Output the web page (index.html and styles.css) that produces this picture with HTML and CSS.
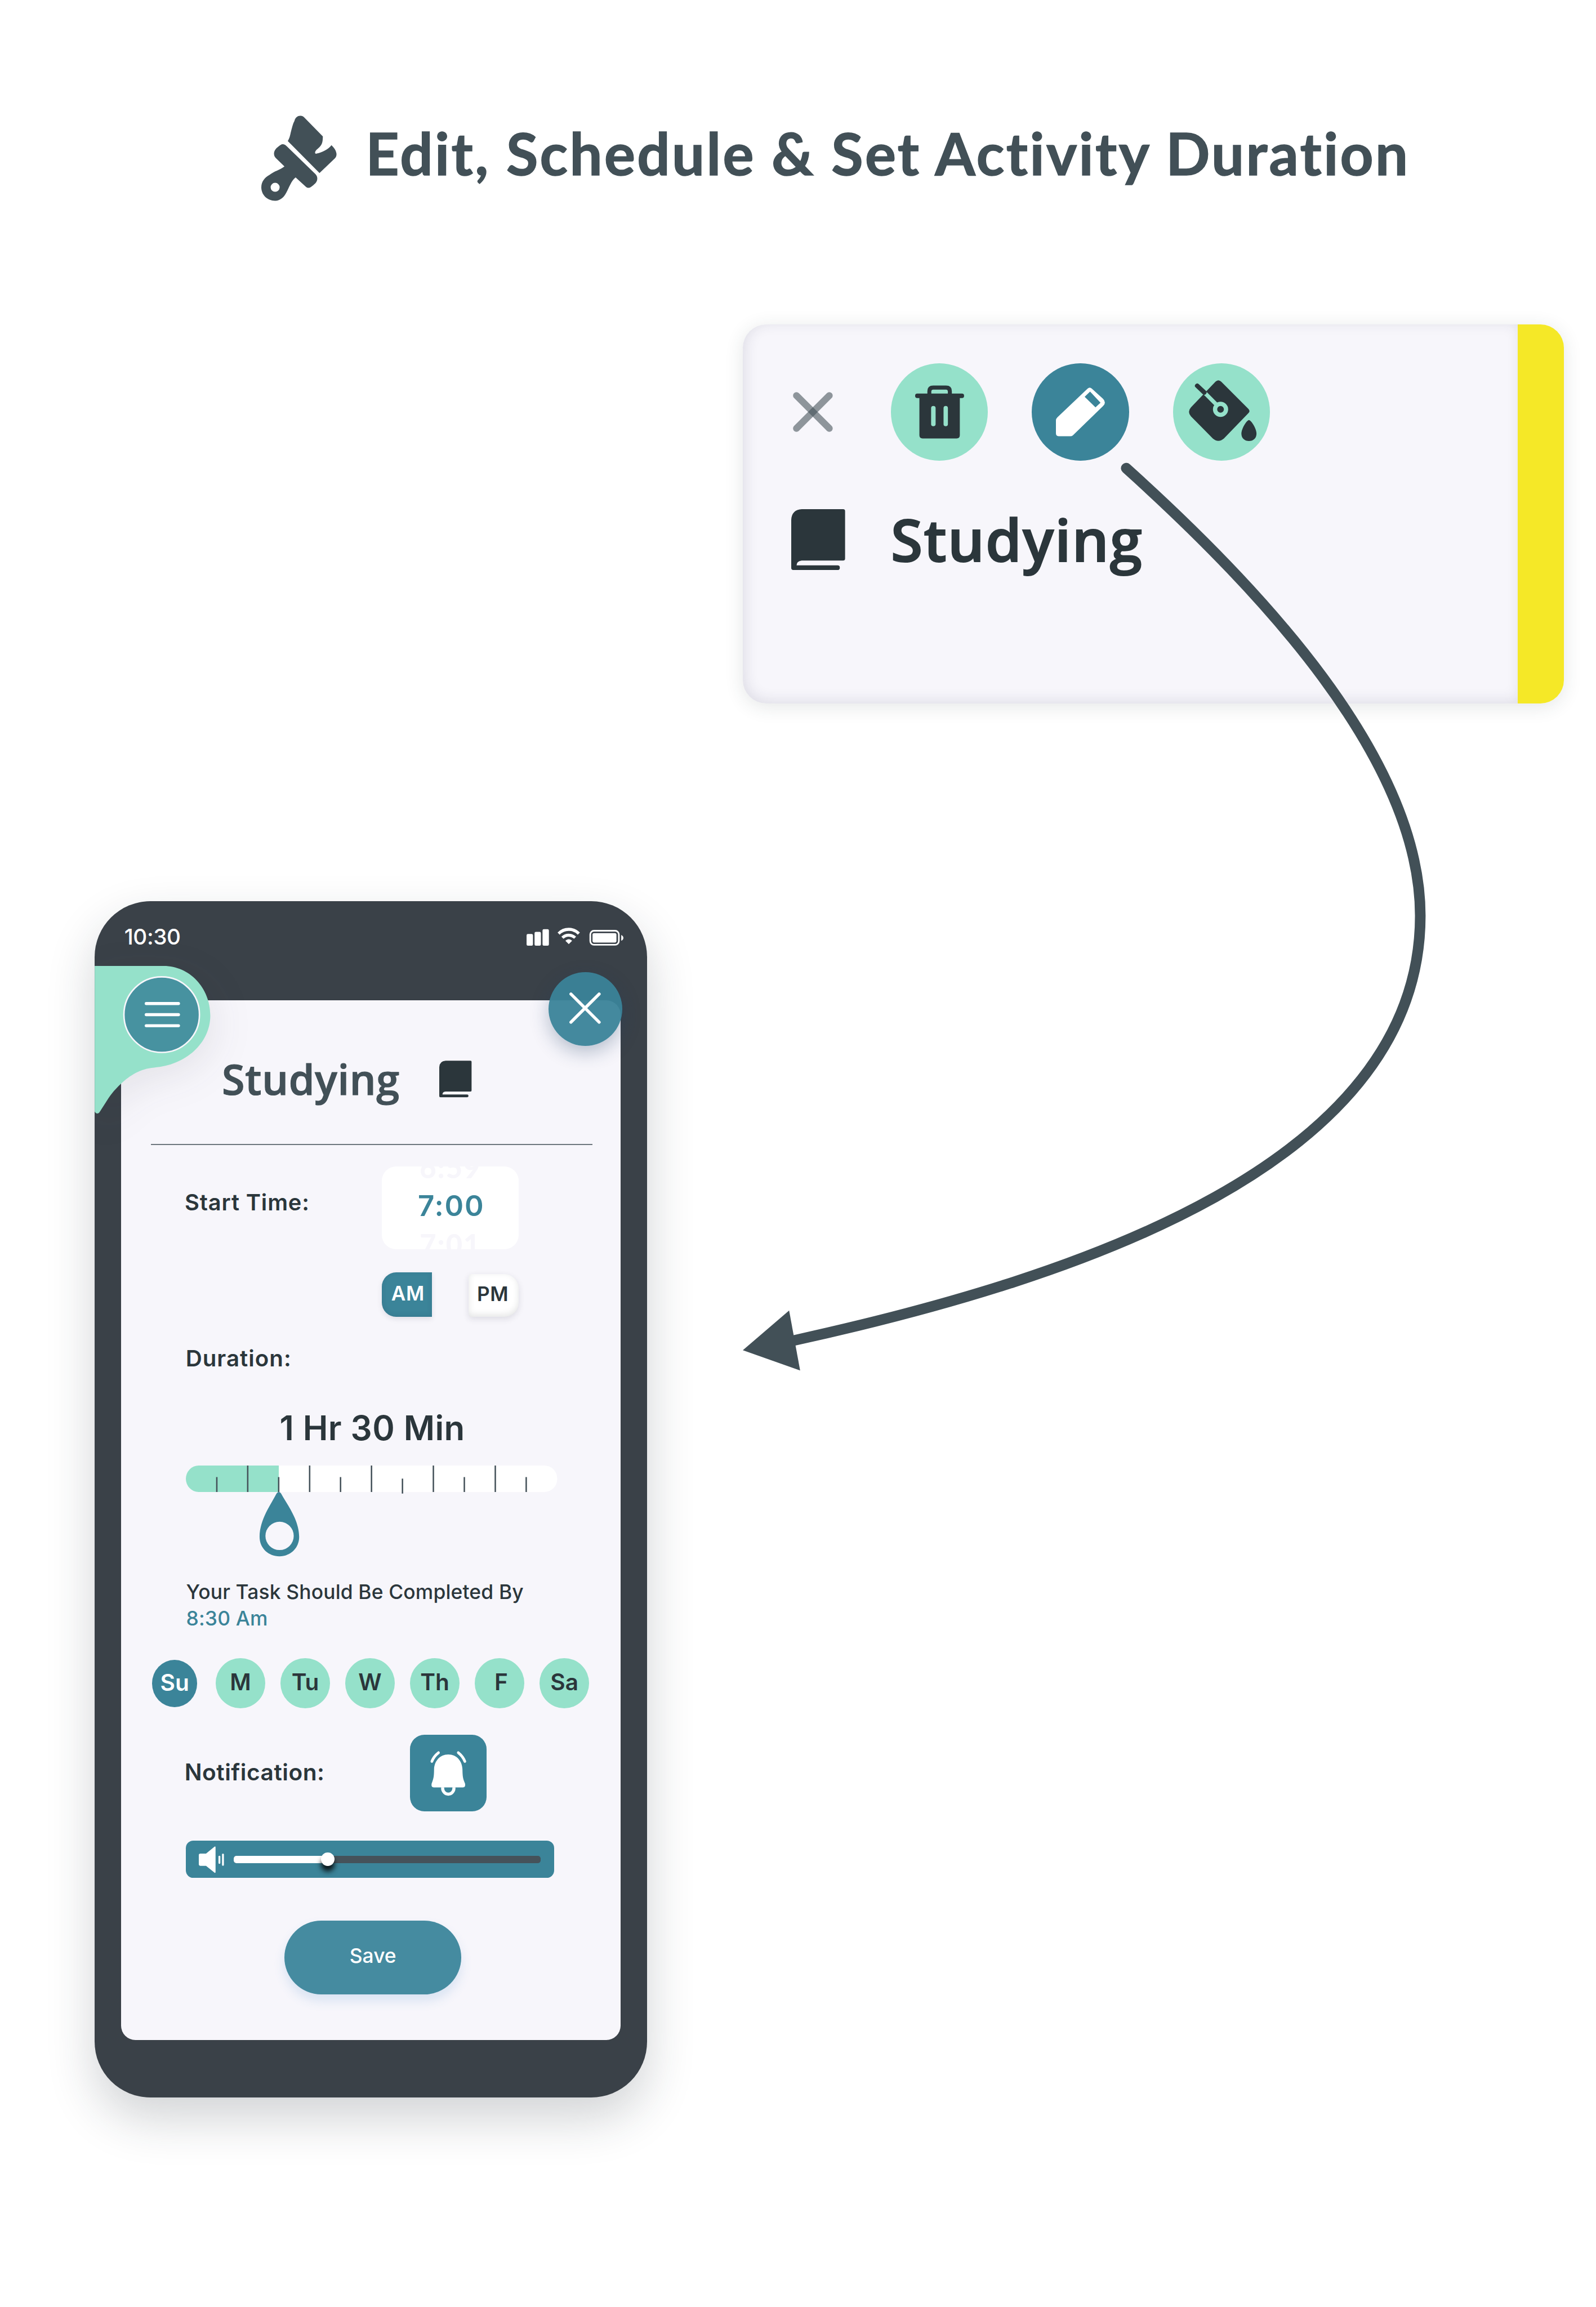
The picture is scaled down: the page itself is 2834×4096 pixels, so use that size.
FILE: index.html
```html
<!DOCTYPE html>
<html lang="en">
<head>
<meta charset="utf-8">
<title>Edit, Schedule &amp; Set Activity Duration</title>
<link rel="stylesheet" href="styles.css">
</head>
<body>
<svg class="defs" aria-hidden="true">
  <symbol id="book" viewBox="0 0 101.4 114.4">
    <path d="M20 0H97.4Q101.4 0 101.4 4V92.5Q101.4 96.5 97.4 96.5H19.6Q10 97.5 10 105.7H87A4.35 4.35 0 0 1 87 114.4H4Q0 114.4 0 110.4V20Q1 1 20 0Z" fill="#2b363b"/>
  </symbol>
</svg>
<main class="page">
  <header class="header">
    <svg class="header-icon" viewBox="0 0 141.7 159.4" fill="#425057">
      <path d="M62.4 9C65 -2 77 -3 82 4L115.7 38.3C115.5 44 115.5 48 113.6 52.3C110.5 59 104 62 101.7 66.3C100 70 102 71.5 104.5 70.5C114 68 126 63 131.9 54.7C137 60 140 64 141 69C142 73 141 77 138.2 79.7L109.4 107.3L49.8 47C53 42 54 37 55.4 30.7C57.500 23 59 15 62.4 9Z"/>
      <path fill-rule="evenodd" d="M45.600 54.700Q40.700 51.500 36 54.500C31 58 24.500 62.500 23.900 69.700C23.700 74 25 76.500 27.400 79L43.500 94.700C36 101 23 104 15.400 110.700C7 115 0 123 0 134C0 148 11 159.300 26 159.300C36 159.300 43 152 47 144C52.500 134 56 122 64.500 115.300L84.200 133.300Q88.400 136.700 93.300 133.300C99 129 105 125 105.200 118.300C105.500 114 104 111.500 101.700 109ZM26 125.500A8.500 8.500 0 1 1 26 142.500A8.500 8.500 0 0 1 26 125.500Z"/>
    </svg>
    <h1 class="title">Edit, Schedule &amp; Set Activity Duration</h1>
  </header>

  <section class="card">
    <div class="card-body">
      <div class="actions">
        <svg class="dismiss" viewBox="0 0 75 75" stroke="#425057" stroke-width="12.800" stroke-linecap="round" stroke-opacity=".58">
          <path d="M6.600 6.600L68.400 68.400"/><path d="M68.400 6.600L6.600 68.400"/>
        </svg>
        <div class="action action-trash">
          <svg class="icon-trash" viewBox="0 0 92 100" fill="#2b363b">
            <path fill-rule="evenodd" d="M23 17V11Q23 0.500 34 0.500H58Q69 0.500 69 11V17H61.500V12Q61.500 8.200 58 8.200H34Q30.400 8.200 30.400 12V17Z"/>
            <rect x="0" y="15.700" width="92" height="8.300" rx="4"/>
            <path fill-rule="evenodd" d="M8 20H84V94Q84 100 78 100H14Q8 100 8 94ZM34.200 38.800Q30 38.800 30 43V73Q30 77 34.200 77T38.500 73V43Q38.500 38.800 34.200 38.800ZM57.500 38.800Q53.400 38.800 53.400 43V73Q53.400 77 57.500 77T61.600 73V43Q61.600 38.800 57.500 38.800Z"/>
          </svg>
        </div>
        <div class="action action-edit">
          <svg class="icon-pencil" viewBox="0 0 92 91.600" fill="#fff">
            <path fill-rule="evenodd" d="M2.700 56L59.500 2Q63.500 -1.500 67.500 2L88.500 21.300Q95.500 28.600 88.500 35L31.800 90Q30 91.600 27 91.600H6Q0 91.600 0 86V62Q0 58.500 2.700 56ZM64.200 7.800L54 17.400L74.400 37.300L83.800 28.600Z"/>
          </svg>
        </div>
        <div class="action action-fill">
          <svg class="icon-bucket" viewBox="0 0 127.300 115" fill="#2b363b">
            <path d="M50 3Q55.500 -2.500 61 3L112 54Q116 58.500 112 62L66 109.500Q55.500 118.500 45 109.500L4 68Q-3.500 59.500 4 51Z"/>
            <path d="M31 25L56 50" stroke="#95e1ca" stroke-width="7.500"/>
            <path d="M15.700 10.500L29 23" stroke="#2b363b" stroke-width="8.500" stroke-linecap="round"/>
            <circle cx="59.600" cy="54.800" r="10.300" stroke="#95e1ca" stroke-width="8"/>
            <path d="M113 75C117 75 127.200 91 127.200 100.500C127.200 109 121 114.300 113 114.300S98.800 109 98.800 100.500C98.800 91 109 75 113 75Z"/>
          </svg>
        </div>
      </div>
      <div class="activity">
        <svg class="activity-book"><use href="#book"/></svg>
        <div class="activity-name">Studying</div>
      </div>
    </div>
    <div class="card-stripe"></div>
  </section>

  <section class="phone">
    <div class="status">
      <span class="clock">10:30</span>
      <svg class="status-icons" viewBox="0 0 182.300 34" fill="#fff">
        <rect x="0" y="12" width="12" height="22" rx="2.500"/>
        <rect x="15" y="8" width="12" height="26" rx="2.500"/>
        <rect x="30" y="3" width="12" height="31" rx="2.500"/>
        <g fill="none" stroke="#fff" stroke-width="5.600">
          <path d="M60.300 11.200A26.500 26.500 0 0 1 98.300 11.200"/>
          <path d="M67.400 19A17 17 0 0 1 91.200 19"/>
        </g>
        <path d="M73 24.700Q79.300 18.500 85.700 24.700L79.300 31Z"/>
        <rect x="119.800" y="5.800" width="53.700" height="26.400" rx="7" fill="none" stroke="#fff" stroke-width="3"/>
        <rect x="124" y="10.300" width="45" height="17.700" rx="3"/>
        <path d="M178 13.700Q182 15.500 182 19.200T178 24.700Z"/>
      </svg>
    </div>

    <div class="screen">
      <div class="screen-title">
        <h2 class="screen-name">Studying</h2>
        <svg class="screen-book"><use href="#book"/></svg>
      </div>
      <div class="divider"></div>

      <div class="start">
        <span class="label">Start Time:</span>
        <div class="picker">
          <span class="picker-ghost">6:59</span>
          <span class="picker-value">7:00</span>
          <span class="picker-ghost">7:01</span>
        </div>
      </div>
      <div class="meridiem">
        <span class="am">AM</span>
        <span class="pm">PM</span>
      </div>

      <div class="duration-label">Duration:</div>
      <div class="duration-value">1 Hr 30 Min</div>
      <svg class="ruler" viewBox="0 0 698 171">
        <rect width="698" height="49.700" rx="24" fill="#fff"/>
        <path d="M174.700 0H24A24 24.850 0 0 0 24 49.700H174.700Z" fill="#95e1ca"/>
        <g stroke="#45525a" stroke-width="2.700">
          <path d="M116.300 0V49.700M232.700 0V49.700M349 0V49.700M465.300 0V49.700M581.700 0V49.700"/>
          <path d="M58.200 21.700V49.700M174.500 21.700V49.700M290.800 21.700V49.700M407.200 24.700V52.700M523.500 21.700V49.700M639.800 21.700V49.700"/>
        </g>
        <path fill="#3b8499" d="M174.700 49.700Q177.500 49.700 179.500 53.500C190 73 213 102 213 134C213 156 196 170.700 175.900 170.700S138.600 156 138.600 134C138.600 102 160 73 170 53.500Q172 49.700 174.700 49.700Z"/>
        <circle cx="176.200" cy="132.300" r="26.600" fill="#f7f6fb"/>
      </svg>

      <div class="finish">
        <div>Your Task Should Be Completed By</div>
        <div class="finish-time">8:30 Am</div>
      </div>

      <div class="days">
        <span class="day day-on">Su</span>
        <span class="day">M</span>
        <span class="day">Tu</span>
        <span class="day">W</span>
        <span class="day">Th</span>
        <span class="day day-f">F</span>
        <span class="day">Sa</span>
      </div>

      <div class="notify">
        <span class="notify-label">Notification:</span>
        <div class="notify-button">
          <svg class="icon-bell" viewBox="0 0 67.900 83.700" fill="#fff">
            <path d="M33.900 6.300C50 6.300 60 19 60.500 34C60.800 44 60.800 49 63.500 56.500L65.500 61.500Q66.500 68.300 61.500 68.300H6.500Q1.500 68.300 2.500 61.500L4.300 56.500C7 49 7 44 7.200 34C7.800 19 17.800 6.300 33.900 6.300Z"/>
            <g fill="none" stroke="#fff" stroke-linecap="round">
              <path d="M23.300 68V70A10.500 10.800 0 0 0 44.500 70V68" stroke-width="5.800" stroke-linecap="butt"/>
              <path d="M15.500 3Q6.500 10 3 19.500M52.700 3Q61.500 10 65.100 19.500" stroke-width="5"/>
            </g>
          </svg>
        </div>
      </div>

      <div class="volume">
        <svg class="icon-speaker" viewBox="0 0 47.500 50.300" fill="#fff">
          <path d="M3 13.700H13.600L29.500 .8Q31.500 -.8 31.500 2V48.300Q31.500 51 29.500 49.500L13.600 36.700H3Q0 36.700 0 33.700V16.700Q0 13.700 3 13.700Z"/>
          <rect x="37" y="17.700" width="3.500" height="15.300" rx="1.700"/>
          <rect x="43.700" y="13.700" width="3.500" height="23" rx="1.700"/>
        </svg>
        <div class="track">
          <div class="track-fill"></div>
          <div class="knob"></div>
        </div>
      </div>

      <div class="save">Save</div>
    </div>

    <svg class="menu-tab" viewBox="0 0 217.500 278">
      <path d="M0 0H130C178 0 217.500 41 217.500 93C217.500 146 170 187 112 191C86 193 66 206 50 221C36 234 28 245 21.400 256L9.500 274.500C7 278.500 3 278.500 0 273.700Z" fill="#95e1ca"/>
      <circle cx="126.100" cy="91.500" r="71" fill="#4792a0" stroke="#f7f6fb" stroke-width="2.800"/>
      <path d="M97 70.700H157.700M97 91.500H157.700M97 112.300H157.700" stroke="#fff" stroke-width="5.700" stroke-linecap="round"/>
    </svg>
    <div class="close">
      <svg class="close-icon" viewBox="0 0 59 59" stroke="#fff" stroke-width="5.800" stroke-linecap="round">
        <path d="M3 3L56 56M56 3L3 56"/>
      </svg>
    </div>
  </section>

  <svg class="arrow" viewBox="0 0 3000 4336">
    <path d="M2117 880C2367 1105 2669.700 1425 2669.700 1721C2669.700 2186 2034 2400 1494 2519" fill="none" stroke="#425057" stroke-width="20" stroke-linecap="round"/>
    <path d="M1396.300 2537.700L1483.300 2463L1504 2575.700Z" fill="#425057"/>
  </svg>
</main>
</body>
</html>
```
FILE: styles.css
```css
/* 1rem = 100 design units */
html { font-size: 94.4667px; }
body { margin: 0; background: #fff; font-family: Inter, "Liberation Sans", sans-serif; font-size: .42rem; color: #2b363b; }
svg { display: block; flex: none; overflow: visible; }
h1, h2 { margin: 0; }
.defs { position: absolute; width: 0; height: 0; }

.page { position: relative; width: 30rem; height: 43.36rem; overflow: hidden; box-sizing: border-box; padding-top: 2.177rem; display: flex; flex-direction: column; align-items: flex-start; }
.arrow { position: absolute; inset: 0; width: 30rem; height: 43.36rem; }

.header { display: flex; align-items: flex-start; gap: .547rem; margin-left: 4.912rem; height: 1.593rem; }
.header-icon { width: 1.417rem; height: 1.594rem; }
.title { font: 700 1.09rem/1.39rem Lato, "Open Sans", sans-serif; letter-spacing: .0325em; color: #425057; white-space: nowrap; -webkit-text-stroke: .016rem #425057; }

.card { display: flex; width: 15.44rem; height: 7.125rem; margin: 2.329rem 0 0 13.96rem; border-radius: .44rem; box-shadow: 0 .06rem .35rem rgba(40, 60, 60, .12); }
.card-body { flex: 1; padding: .73rem 0 0 .908rem; background: #f7f6fb; border-radius: .44rem 0 0 .44rem; box-shadow: inset .04rem -.04rem .26rem rgba(40, 40, 70, .12); }
.card-stripe { width: .868rem; background: #f5e827; border-radius: 0 .44rem .44rem 0; }
.actions { display: flex; align-items: center; margin-left: .034rem; }
.dismiss { width: .75rem; height: .75rem; margin-right: 1.095rem; }
.action { display: flex; align-items: center; justify-content: center; width: 1.826rem; height: 1.826rem; margin-right: .824rem; border-radius: 50%; background: #95e1ca; }
.action-edit { background: #3b8499; }
.icon-trash { width: .92rem; height: 1rem; }
.icon-pencil { width: .92rem; height: .916rem; }
.icon-bucket { width: 1.273rem; height: 1.15rem; margin: 0 0 .04rem .05rem; }
.activity { display: flex; align-items: center; gap: .862rem; margin-top: .914rem; height: 1.144rem; }
.activity-book { width: 1.014rem; height: 1.144rem; }
.activity-name { font: 600 1.09rem/1.16rem "Open Sans", sans-serif; letter-spacing: .018em; -webkit-text-stroke: .022rem #2b363b; }

.phone { position: relative; width: 10.38rem; height: 22.479rem; margin: 3.714rem 0 0 1.78rem; border-radius: 1.05rem; background: #3a4148; box-shadow: 0 .4rem .9rem rgba(30, 40, 50, .2); }
.status { display: flex; align-items: center; justify-content: space-between; box-sizing: border-box; height: 1.859rem; padding: .492rem .437rem 1.027rem .557rem; }
.clock { font-size: .41rem; font-weight: 500; line-height: .34rem; letter-spacing: -.012em; color: #fff; }
.status-icons { width: 1.823rem; height: .34rem; }

.screen { display: flex; flex-direction: column; align-items: flex-start; width: 9.387rem; height: 19.543rem; margin-left: .5rem; border-radius: .27rem; background: #f7f6fb; }
.screen-title { display: flex; align-items: center; margin: 1.133rem 0 0 1.892rem; height: .694rem; }
.screen-name { width: 4.088rem; font: 600 .78rem/.694rem "Open Sans", sans-serif; letter-spacing: .01em; color: #425057; -webkit-text-stroke: .013rem #425057; }
.screen-book { width: .61rem; height: .694rem; }
.divider { width: 8.305rem; height: .02rem; margin: .876rem 0 0 .555rem; background: #6d777e; }

.start { display: flex; align-items: flex-start; margin: .4rem 0 0 1.192rem; }
.label { width: 3.709rem; font-size: .422rem; font-weight: 600; line-height: 1.35rem; letter-spacing: .021em; }
.picker { display: flex; flex-direction: column; align-items: center; width: 2.572rem; height: 1.557rem; border-radius: .27rem; background: #fff; overflow: hidden; line-height: .72rem; }
.picker-value { margin-left: .03rem; font-size: .54rem; font-weight: 600; letter-spacing: .035em; color: #3b8499; }
.picker-ghost { font-family: Lato, sans-serif; font-size: .535rem; font-weight: 900; letter-spacing: .04em; color: #f7f6fb; }
.picker-ghost:first-child { margin-top: -.34rem; }

.meridiem { display: flex; align-items: flex-end; gap: .689rem; margin: .436rem 0 0 4.901rem; font-size: .372rem; font-weight: 600; letter-spacing: .02em; text-align: center; }
.am { box-sizing: border-box; width: .937rem; padding: 0 0 .05rem .04rem; line-height: .784rem; border-radius: .27rem 0 0 .27rem; background: #3b8499; color: #fff; box-shadow: 0 .04rem .1rem rgba(30, 30, 60, .1), inset 0 -.02rem .1rem rgba(30, 40, 60, .1); }
.pm { box-sizing: border-box; width: .946rem; padding: 0 .03rem .05rem 0; line-height: .753rem; border-radius: .06rem .27rem .27rem .06rem; background: #fff; box-shadow: 0 .04rem .12rem rgba(30, 30, 60, .12), inset 0 -.04rem .12rem rgba(30, 40, 40, .12); }

.duration-label { margin: .49rem 0 0 1.21rem; font-size: .426rem; font-weight: 600; line-height: .6rem; letter-spacing: .025em; }
.duration-value { margin: .603rem 0 0 2.975rem; font-size: .635rem; font-weight: 600; line-height: .8rem; letter-spacing: .007em; }
.ruler { width: 6.98rem; height: 1.71rem; margin: .303rem 0 0 1.216rem; }

.finish { margin: .418rem 0 0 1.219rem; font-size: .375rem; font-weight: 500; line-height: .498rem; letter-spacing: .004em; white-space: nowrap; }
.finish-time { color: #3b8499; }

.days { display: flex; align-items: center; margin: .5rem 0 0 .578rem; gap: .281rem; }
.day { box-sizing: border-box; width: .937rem; height: .943rem; border-radius: 50%; background: #95e1ca; font-size: .43rem; font-weight: 600; line-height: .92rem; text-align: center; }
.day-on { width: .852rem; height: .887rem; margin-right: .061rem; line-height: .865rem; background: #3b8499; color: #fff; }
.day-f { padding-left: .06rem; }

.notify { display: flex; align-items: center; margin: .5rem 0 0 1.189rem; }
.notify-label { width: 4.234rem; padding-bottom: .03rem; font-size: .43rem; font-weight: 600; letter-spacing: .013em; }
.notify-button { display: flex; align-items: center; justify-content: center; width: 1.444rem; height: 1.437rem; border-radius: .27rem; background: #3b8499; }
.icon-bell { width: .679rem; height: .837rem; }

.volume { display: flex; align-items: center; box-sizing: border-box; width: 6.926rem; height: .697rem; margin: .553rem 0 0 1.216rem; padding-left: .245rem; border-radius: .14rem; background: #3b8499; }
.icon-speaker { width: .475rem; height: .503rem; margin-right: .174rem; }
.track { position: relative; width: 5.773rem; height: .14rem; border-radius: .05rem; background: #45525a; }
.track-fill { width: 1.765rem; height: 100%; border-radius: .05rem 0 0 .05rem; background: #fff; }
.knob { position: absolute; left: 1.643rem; top: -.056rem; width: .252rem; height: .252rem; border-radius: 50%; background: #fff; box-shadow: 0 .1rem .1rem rgba(0, 0, 0, .85); }

.save { width: 3.318rem; margin: .803rem 0 0 3.071rem; padding-bottom: .05rem; border-radius: .7rem; background: #458ba0; box-shadow: 0 .12rem .2rem rgba(60, 130, 200, .16); color: #fff; font-size: .375rem; font-weight: 500; line-height: 1.333rem; text-align: center; }

.menu-tab { position: absolute; left: 0; top: 1.219rem; width: 2.175rem; height: 2.78rem; filter: drop-shadow(.1rem .2rem .35rem rgba(40, 40, 60, .09)); clip-path: inset(-1rem -2rem -2rem 0); }
.close { position: absolute; left: 8.527rem; top: 1.329rem; display: flex; align-items: center; justify-content: center; width: 1.387rem; height: 1.39rem; border-radius: 50%; background: rgba(58, 131, 153, .95); box-shadow: 0 .12rem .35rem rgba(30, 60, 100, .3); }
.close-icon { width: .59rem; height: .59rem; margin-bottom: .03rem; }
```
